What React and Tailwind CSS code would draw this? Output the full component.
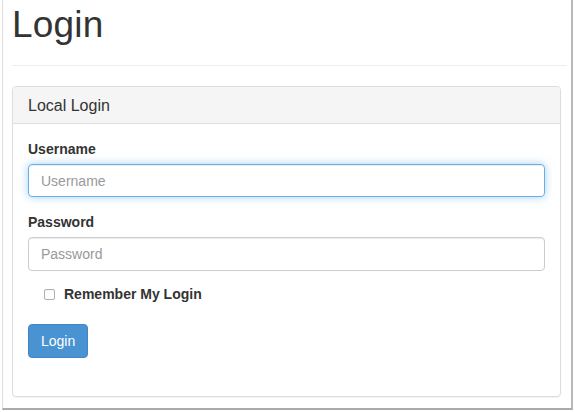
import React from "react";

const App = () => {
  return (
    <div className="w-[574px] h-[412px] bg-white font-['Liberation_Sans',Arial,sans-serif] text-[#333]">
      <div className="ml-[2px] w-[571px] h-[410px] border-l border-l-[#dedede] border-r-2 border-r-[#b8b8b8] border-b-2 border-b-[#aaaaaa] pl-[9px] pr-[4px] overflow-hidden">
        {/* Page header */}
        <div className="pt-[5px] pb-[9px] mb-[20px] border-b border-[#eeeeee]">
          <h1 className="text-[37px] leading-[1.1] mb-[10px] text-[#333] tracking-[0.2px]">Login</h1>
        </div>

        {/* Panel */}
        <div className="w-[549px] border border-[#dddddd] rounded-[4px] shadow-[0_1px_1px_rgba(0,0,0,0.05)]">
          <div className="bg-[#f5f5f5] border-b border-[#dddddd] rounded-t-[3px] px-[15px] pt-[10px] pb-[9px] text-[16px] leading-[1.1]">
            Local Login
          </div>
          <div className="px-[15px] pt-[15px] pb-[38px]">
            <div className="mb-[15px]">
              <label className="block text-[14px] font-bold leading-[20px] mb-[5px]">Username</label>
              <input
                type="text"
                placeholder="Username"
                className="block w-full h-[33px] px-[12px] text-[14px] rounded-[4px] border border-[#66afe9] outline-none placeholder:text-[#999] shadow-[inset_0_1px_1px_rgba(0,0,0,0.075),0_0_8px_rgba(102,175,233,0.6)]"
              />
            </div>
            <div className="mb-[15px]">
              <label className="block text-[14px] font-bold leading-[20px] mb-[5px]">Password</label>
              <input
                type="password"
                placeholder="Password"
                className="block w-full h-[34px] px-[12px] text-[14px] rounded-[4px] border border-[#cccccc] outline-none placeholder:text-[#999] shadow-[inset_0_1px_1px_rgba(0,0,0,0.075)]"
              />
            </div>
            <div className="flex items-center pl-[16px] h-[20px] -mt-[2px] mb-[20px]">
              <span className="w-[11px] h-[11px] rounded-[2px] border border-[#b0b0b0] bg-white shadow-[inset_0_1px_1px_rgba(0,0,0,0.05)]"></span>
              <span className="ml-[9px] text-[14px] font-bold leading-[20px]">Remember My Login</span>
            </div>
            <button className="h-[34px] px-[12px] rounded-[4px] bg-[#4a93d2] border border-[#4287c4] text-white text-[14px] leading-[20px]">
              Login
            </button>
          </div>
        </div>
      </div>
    </div>
  );
};

export default App;
